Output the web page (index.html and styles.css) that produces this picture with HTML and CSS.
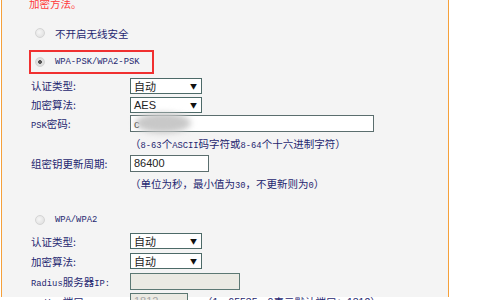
FILE: index.html
```html
<!DOCTYPE html>
<html lang="zh-CN">
  <head>
    <meta charset="UTF-8" />
    <meta name="viewport" content="width=device-width, initial-scale=1.0" />
    <title>无线安全设置</title>
    <link rel="stylesheet" href="styles.css">
  </head>
  <body>
    <main class="panel">
      <p class="title">加密方法。</p>

      <div class="opt"><span class="radio"></span>不开启无线安全</div>

      <div class="opt opt_picked">
        <span class="radio radio_on"></span><span class="en">WPA-PSK/WPA2-PSK</span>
      </div>

      <div class="form form_psk">
        <span class="label">认证类型:</span>
        <div class="select">自动<i>&#9660;</i></div>

        <span class="label">加密算法:</span>
        <div class="select"><span class="latin">AES</span><i>&#9660;</i></div>

        <span class="label"><span class="en">PSK</span>密码:</span>
        <div class="field">
          <div class="input input_psk"><span class="latin">c</span></div>
          <span class="smudge"></span>
        </div>

        <span class="hint">（<span class="en">8-63</span>个<span class="en">ASCII</span>码字符或<span class="en">8-64</span>个十六进制字符）</span>

        <span class="label">组密钥更新周期:</span>
        <div class="input input_period"><span class="latin">86400</span></div>

        <span class="hint">（单位为秒，最小值为<span class="en">30</span>，不更新则为<span class="en">0</span>）</span>
      </div>

      <div class="opt opt_wpa"><span class="radio"></span><span class="en">WPA/WPA2</span></div>

      <div class="form form_wpa">
        <span class="label">认证类型:</span>
        <div class="select">自动<i>&#9660;</i></div>

        <span class="label">加密算法:</span>
        <div class="select">自动<i>&#9660;</i></div>

        <span class="label"><span class="en">Radius</span>服务器<span class="en">IP:</span></span>
        <div class="input input_off input_ip"></div>

        <span class="label"><span class="en">Radius</span>端口:</span>
        <div class="port_row">
          <div class="input input_off input_port"><span class="latin">1812</span></div>
          <span class="port_hint">（<span class="latin">1－65535，0</span>表示默认端口：<span class="latin">1812</span>）</span>
        </div>
      </div>
    </main>
  </body>
</html>
```

FILE: styles.css
```css
body {
  margin: 0;
  height: 300px;
  overflow: hidden;
  background-color: #ffffff;

  --orange: #f5a03a;
  --navy: #1f2770;
  --edge: #4d6a68;

  font-family: "Noto Sans CJK SC", sans-serif;
  font-size: 10.5px;
  color: var(--navy);
}

.panel {
  margin-left: 1px;
  width: 446px;
  height: 300px;
  border-left: 1px solid var(--orange);
  border-right: 1px solid var(--orange);
  background-color: #f4f4f4;
}

.en {
  font-family: "Liberation Mono", monospace;
  font-size: 8.8px;
}

.latin {
  font-family: "Liberation Sans", sans-serif;
}

.title {
  margin: -3px 0 0 27px;
  height: 14px;
  line-height: 14px;
  color: #ff3b3b;
}

/* radio rows */
.opt {
  display: flex;
  align-items: center;
  height: 14px;
  margin: 15px 0 0 33px;
  gap: 10px;
}

.opt_picked {
  box-sizing: border-box;
  width: 125px;
  height: 24px;
  margin: 10px 0 0 27px;
  padding-left: 4px;
  border: 2px solid #f03030;
}

.opt_wpa {
  margin-top: 20px;
}

.radio {
  flex: none;
  box-sizing: border-box;
  width: 10px;
  height: 10px;
  border-radius: 50%;
  border: 1px solid #d4d4d4;
  background: radial-gradient(circle at 40% 40%, #f6f6f6, #dcdcdc);
}

.radio_on {
  background: radial-gradient(circle, #555 0 1.6px, #e2e2e2 2.2px, #d8d8d8);
}

/* forms */
.form {
  display: grid;
  grid-template-columns: 99px auto;
  align-items: center;
  padding-left: 29px;
}

.form_psk {
  margin-top: 2px;
  grid-template-rows: 19px 19px 19px 20px 20px 20px;
}

.form_wpa {
  margin-top: 4px;
  grid-auto-rows: 20px;
}

.label {
  white-space: nowrap;
}

.hint {
  grid-column: 2;
  white-space: nowrap;
}

.select {
  box-sizing: border-box;
  display: flex;
  align-items: center;
  justify-content: space-between;
  width: 72px;
  height: 16px;
  padding: 0 4px 0 3px;
  border: 1px solid var(--edge);
  background-color: #ffffff;
  color: #222;
  font-size: 11px;
}

.select i {
  font-style: normal;
  font-size: 7px;
  color: #111;
}

.field {
  position: relative;
  width: 244px;
}

.input {
  box-sizing: border-box;
  display: flex;
  align-items: center;
  height: 17px;
  padding-left: 3px;
  border: 1px solid #5b6e6e;
  background-color: #ffffff;
  color: #222;
  font-size: 11px;
}

.input_psk {
  width: 244px;
}

.input_period {
  width: 79px;
}

.input_off {
  background-color: #ebeae3;
  border-color: #5c7873;
  color: #a8a8a8;
}

.input_ip {
  width: 110px;
}

.input_port {
  width: 58px;
}

/* blurred-out password */
.smudge {
  position: absolute;
  left: 5px;
  top: -2px;
  width: 56px;
  height: 20px;
  border-radius: 50%;
  background-color: #c8c8c8;
  filter: blur(3px);
}

.port_row {
  display: flex;
  align-items: center;
  gap: 14px;
}

.port_hint {
  white-space: nowrap;
}
```
